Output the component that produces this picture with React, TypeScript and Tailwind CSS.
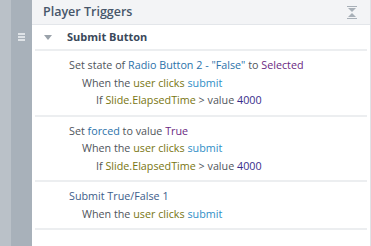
import React from 'react';

const gray = 'text-[#4f545a]';
const blue = 'text-[#2b72aa]';
const purple = 'text-[#6a2882]';
const olive = 'text-[#787510]';
const sky = 'text-[#2f8ec6]';
const num = 'text-[#382c8a]';

function WhenLine() {
  return (
    <div className="pl-[13px]">
      <span className={gray}>When the </span>
      <span className={olive}>user clicks </span>
      <span className={sky}>submit</span>
    </div>
  );
}

function IfLine() {
  return (
    <div className="pl-[27px]">
      <span className={gray}>If </span>
      <span className={olive}>Slide.ElapsedTime </span>
      <span className={gray}>&gt; value </span>
      <span className={num}>4000</span>
    </div>
  );
}

export default function App() {
  return (
    <div
      className="flex w-[371px] h-[246px] bg-white overflow-hidden text-[10.75px]"
      style={{ fontFamily: '"Open Sans", sans-serif' }}
    >
      {/* left strip */}
      <div className="w-[11px] bg-[#bac1c8]" />
      <div className="w-[21px] bg-[#a8b1ba] flex justify-center pt-[33px]">
        <div className="flex flex-col gap-[1px]">
          <div className="w-[7px] h-[2px] bg-[#dfe3e7]" />
          <div className="w-[7px] h-[2px] bg-[#dfe3e7]" />
          <div className="w-[7px] h-[2px] bg-[#dfe3e7]" />
        </div>
      </div>

      {/* panel */}
      <div className="flex-1 flex flex-col border-r border-[#dfe2e6]">
        <div className="h-[25px] bg-[#f3f4f6] border-b border-[#e3e6ea] flex items-center justify-between pl-[11px] pr-[13px]">
          <span className="text-[12.5px] text-[#47566a] font-semibold">Player Triggers</span>
          <svg width="10" height="13" viewBox="0 0 10 13">
            <rect x="0" y="0" width="10" height="1" fill="#a8b0b8" />
            <path d="M1 2 H9 L5 6 Z" fill="#a8b0b8" />
            <path d="M1 11 H9 L5 7 Z" fill="#a8b0b8" />
            <rect x="0" y="12" width="10" height="1" fill="#a8b0b8" />
          </svg>
        </div>

        <div className="mx-[3px] flex flex-col">
          <div className="h-[26px] border-b-2 border-[#eceef0] flex items-center pl-[9px]">
            <svg width="8" height="5" viewBox="0 0 8 5" className="mr-[15px]">
              <path d="M0 0 H8 L4 5 Z" fill="#9aa2aa" />
            </svg>
            <span className="text-[11px] font-bold text-[#3a485a]">Submit Button</span>
          </div>

          <div className="border-b-2 border-[#eceef0] pl-[34px] pt-[6px] pb-[5px] leading-[17.5px]">
            <div>
              <span className={gray}>Set state of </span>
              <span className={blue}>Radio Button 2 - "False" </span>
              <span className={gray}>to </span>
              <span className={purple}>Selected</span>
            </div>
            <WhenLine />
            <IfLine />
          </div>

          <div className="border-b-2 border-[#eceef0] pl-[34px] pt-[6px] pb-[5px] leading-[17.5px]">
            <div>
              <span className={gray}>Set </span>
              <span className={blue}>forced </span>
              <span className={gray}>to value </span>
              <span className={purple}>True</span>
            </div>
            <WhenLine />
            <IfLine />
          </div>

          <div className="border-b-2 border-[#eceef0] pl-[34px] pt-[6px] pb-[5px] leading-[17.5px]">
            <div className="text-[#3d5d8a]">Submit True/False 1</div>
            <WhenLine />
          </div>
        </div>
      </div>
    </div>
  );
}
